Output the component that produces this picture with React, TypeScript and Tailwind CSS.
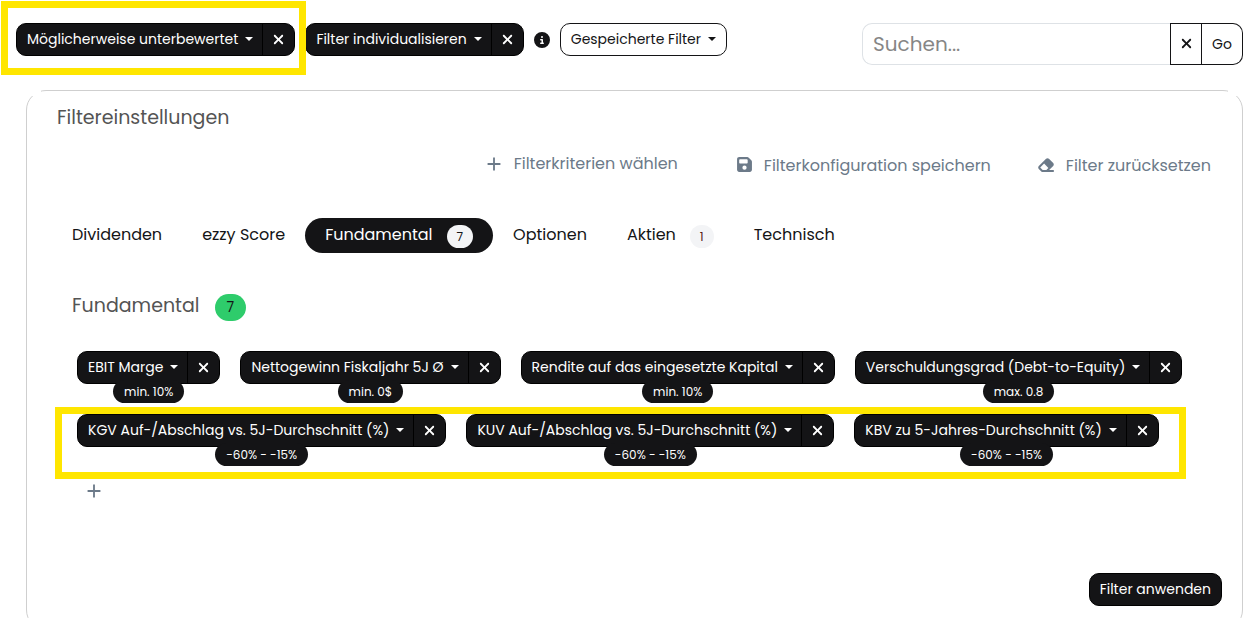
import { BiPlus } from "react-icons/bi";
import { FaCircleInfo, FaEraser, FaFloppyDisk, FaXmark } from "react-icons/fa6";

type Filter = { label: string; value: string };

const firstRow: Filter[] = [
  { label: "EBIT Marge", value: "min. 10%" },
  { label: "Nettogewinn Fiskaljahr 5J Ø", value: "min. 0$" },
  { label: "Rendite auf das eingesetzte Kapital", value: "min. 10%" },
  { label: "Verschuldungsgrad (Debt-to-Equity)", value: "max. 0.8" },
];

const secondRow: Filter[] = [
  { label: "KGV Auf-/Abschlag vs. 5J-Durchschnitt (%)", value: "-60% - -15%" },
  { label: "KUV Auf-/Abschlag vs. 5J-Durchschnitt (%)", value: "-60% - -15%" },
  { label: "KBV zu 5-Jahres-Durchschnitt (%)", value: "-60% - -15%" },
];

const tabs = [
  { label: "Dividenden" },
  { label: "ezzy Score" },
  { label: "Fundamental", count: 7, active: true },
  { label: "Optionen" },
  { label: "Aktien", count: 1 },
  { label: "Technisch" },
];

function Caret() {
  return <span className="ml-[7px] border-x-4 border-t-4 border-x-transparent border-t-current" />;
}

function SplitButton({ label }: { label: string }) {
  return (
    <div className="flex h-[33px] overflow-hidden rounded-[10px] border border-black bg-[#141416] text-sm whitespace-nowrap text-white">
      <button type="button" className="flex items-center border-r border-black pr-[9px] pb-[2px] pl-[10px]">
        {label}
        <Caret />
      </button>
      <button type="button" aria-label="Entfernen" className="flex w-[31px] items-center justify-center pb-px">
        <FaXmark className="size-[15px]" />
      </button>
    </div>
  );
}

function FilterChip({ label, value }: Filter) {
  return (
    <div className="flex flex-col items-center">
      <SplitButton label={label} />
      <span className="-mt-1 h-[23px] rounded-full bg-[#141416] px-[11px] pt-px text-xs leading-[22px] whitespace-nowrap text-white">
        {value}
      </span>
    </div>
  );
}

export default function App() {
  return (
    <div className="h-screen overflow-hidden bg-white font-[Poppins,Inter,sans-serif] text-[#141416]">
      <header className="flex items-start justify-between pt-[23px] pr-[9px] pl-4">
        <div className="flex items-center gap-[10px]">
          <div className="relative">
            <SplitButton label="Möglicherweise unterbewertet" />
            <div className="pointer-events-none absolute -top-[22px] -right-[11px] -bottom-[19px] -left-[15px] border-[7px] border-[#ffe600]" />
          </div>
          <SplitButton label="Filter individualisieren" />
          <FaCircleInfo className="size-4" />
          <button
            type="button"
            className="flex h-[33px] items-center rounded-[10px] border border-[#141416] px-[10px] pb-[2px] text-sm whitespace-nowrap"
          >
            Gespeicherte Filter
            <Caret />
          </button>
        </div>
        <form className="flex h-[42px] w-[381px]">
          <input
            type="text"
            aria-label="Suchen"
            placeholder="Suchen..."
            className="min-w-0 flex-1 rounded-l-[10px] border border-r-0 border-[#dee2e6] px-[10px] text-xl placeholder:text-[#868686]"
          />
          <button type="reset" aria-label="Leeren" className="flex w-8 items-center justify-center border border-[#141416] pb-px">
            <FaXmark className="size-[15px]" />
          </button>
          <button type="submit" className="w-[41px] rounded-r-[10px] border border-l-0 border-[#141416] text-sm">
            Go
          </button>
        </form>
      </header>

      <main className="relative mt-[25px] mr-[9px] ml-[26px] h-[540px] rounded-[20px] border border-[#cfcfcf]">
        <span className="absolute -top-px left-[5px] h-[6px] w-[9px] bg-white" />
        <span className="absolute -top-px right-[5px] h-[6px] w-[9px] bg-white" />

        <h1 className="mt-[13px] ml-[30px] text-[19px] leading-7 text-[#545454]">Filtereinstellungen</h1>

        <div className="mt-5 mr-[31px] flex items-center justify-end gap-[46px] text-base text-[#6c7a89]">
          <button type="button" className="mr-3 flex items-center gap-[9px] pb-1">
            <BiPlus className="size-[22px]" />
            Filterkriterien wählen
          </button>
          <button type="button" className="flex items-center gap-[11px]">
            <FaFloppyDisk className="mb-[3px] size-[17px]" />
            Filterkonfiguration speichern
          </button>
          <button type="button" className="flex items-center gap-[11px]">
            <FaEraser className="mb-[3px] size-[18px]" />
            Filter zurücksetzen
          </button>
        </div>

        <nav className="mt-[38px] ml-[25px] flex">
          {tabs.map((tab) => (
            <button
              key={tab.label}
              type="button"
              className={
                tab.active
                  ? "flex h-[35px] items-center rounded-full bg-[#141416] px-5 pb-[2px] text-base text-white"
                  : "flex h-[35px] items-center px-5 pb-[2px] text-base"
              }
            >
              {tab.label}
              {tab.count !== undefined && (
                <span
                  className={
                    tab.active
                      ? "mt-[3px] ml-[14px] rounded-full bg-[#f3f4f6] px-[10px] text-xs leading-[23px] text-[#141416]"
                      : "mt-[3px] ml-[14px] rounded-full bg-[#f3f4f6] px-[10px] text-xs leading-[23px] text-[#5a1a1a]"
                  }
                >
                  {tab.count}
                </span>
              )}
            </button>
          ))}
        </nav>

        <h2 className="mt-[37px] ml-[45px] flex items-center gap-[15px] text-[19px] leading-7 text-[#545454]">
          Fundamental
          <span className="mt-1 rounded-full bg-[#2ecc6b] px-3 text-sm leading-[27px] text-[#141416]">7</span>
        </h2>

        <div className="mt-[30px] ml-[50px] flex gap-5">
          {firstRow.map((f) => (
            <FilterChip key={f.label} {...f} />
          ))}
        </div>
        <div className="relative mt-[11px] mr-14 ml-[28px] flex gap-5 pl-[22px]">
          {secondRow.map((f) => (
            <FilterChip key={f.label} {...f} />
          ))}
          <div className="pointer-events-none absolute inset-x-0 -top-[7px] -bottom-[13px] border-[7px] border-[#ffe600]" />
        </div>

        <button type="button" aria-label="Hinzufügen" className="mt-[14px] ml-[56px] block text-[#6c7a89]">
          <BiPlus className="size-[22px]" />
        </button>

        <div className="mt-[71px] mr-5 flex justify-end">
          <button type="button" className="h-[33px] rounded-[10px] border border-black bg-[#141416] px-[10px] pb-px text-sm text-white">
            Filter anwenden
          </button>
        </div>
      </main>
    </div>
  );
}
